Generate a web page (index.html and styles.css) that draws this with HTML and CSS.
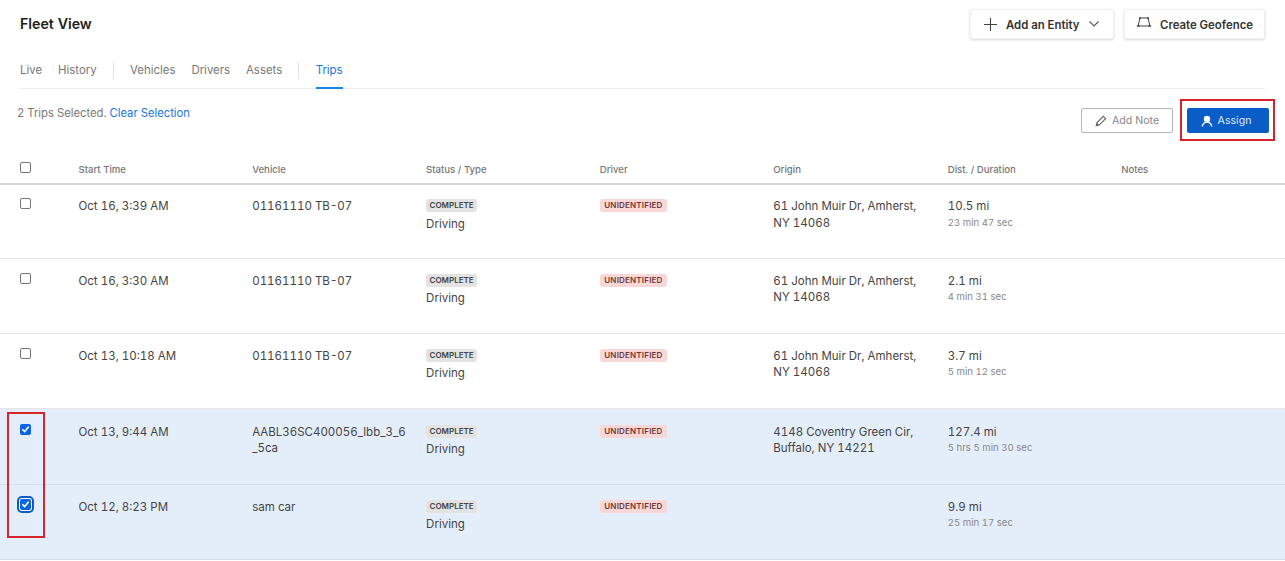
FILE: index.html
```html
<!DOCTYPE html>
<html lang="en">
<head>
<meta charset="utf-8">
<title>Fleet View</title>
<link rel="stylesheet" href="styles.css">
</head>
<body>
<header class="top">
  <h1 class="title">Fleet View</h1>
  <div class="top-actions">
    <button class="btn-card entity">
      <svg width="13" height="13" viewBox="0 0 13 13" class="ic"><path d="M6.500 0v13M0 6.500h13" stroke="#444" stroke-width="1.100" fill="none"/></svg>
      <span>Add an Entity</span>
      <svg width="10" height="6" viewBox="0 0 10 6" class="chev"><path d="M.5.500 5 5 9.500.5" stroke="#555" stroke-width="1.100" fill="none"/></svg>
    </button>
    <button class="btn-card geofence">
      <svg width="14" height="10" viewBox="0 0 14 10" class="ic"><path d="M3 1h8l2 8H1z" stroke="#444" stroke-width="1" fill="none"/><path d="M0 9h2.500M11.500 9H14M2 1h2M10 1h2" stroke="#444" stroke-width="1.500" fill="none"/></svg>
      <span>Create Geofence</span>
    </button>
  </div>
</header>
<nav class="tabs">
  <a class="tab">Live</a>
  <a class="tab">History</a>
  <i class="sep"></i>
  <a class="tab">Vehicles</a>
  <a class="tab">Drivers</a>
  <a class="tab">Assets</a>
  <i class="sep"></i>
  <a class="tab active">Trips</a>
</nav>
<section class="bar">
  <p class="selected">2 Trips Selected. <a class="link">Clear Selection</a></p>
  <div class="bar-actions">
    <button class="btn-note">
      <svg width="12" height="12" viewBox="0 0 12 12"><path d="M1.200 10.800l.7-3L8.300 1.400l2.300 2.300-6.400 6.400z" fill="none" stroke="#666" stroke-width="1.100"/><path d="M1.200 10.800l.7-3 2.300 2.300z" fill="#666"/></svg>
      Add Note
    </button>
    <div class="frame">
      <button class="btn-assign">
        <svg width="12" height="12" viewBox="0 0 12 12"><circle cx="6" cy="4" r="3.200" fill="#fff"/><path d="M1.200 11.500C1.800 8.600 3.600 7.200 6 7.200s4.200 1.400 4.800 4.300" fill="none" stroke="#fff" stroke-width="1.300"/></svg>
        Assign
      </button>
    </div>
  </div>
</section>
<main class="table">
  <div class="row head">
    <div class="cb-cell"><input type="checkbox" class="cb"></div>
    <div>Start Time</div><div>Vehicle</div><div>Status / Type</div><div>Driver</div><div>Origin</div><div>Dist. / Duration</div><div>Notes</div>
  </div>
  <div class="row first">
    <div class="cb-cell"><input type="checkbox" class="cb"></div>
    <div>Oct 16, 3:39 AM</div><div>01161110 TB-07</div>
    <div><span class="tag grey">COMPLETE</span><div class="type">Driving</div></div>
    <div><span class="tag red">UNIDENTIFIED</span></div>
    <div>61 John Muir Dr, Amherst,<br>NY 14068</div>
    <div>10.5 mi<div class="sub">23 min 47 sec</div></div><div></div>
  </div>
  <div class="row">
    <div class="cb-cell"><input type="checkbox" class="cb"></div>
    <div>Oct 16, 3:30 AM</div><div>01161110 TB-07</div>
    <div><span class="tag grey">COMPLETE</span><div class="type">Driving</div></div>
    <div><span class="tag red">UNIDENTIFIED</span></div>
    <div>61 John Muir Dr, Amherst,<br>NY 14068</div>
    <div>2.1 mi<div class="sub">4 min 31 sec</div></div><div></div>
  </div>
  <div class="row">
    <div class="cb-cell"><input type="checkbox" class="cb"></div>
    <div>Oct 13, 10:18 AM</div><div>01161110 TB-07</div>
    <div><span class="tag grey">COMPLETE</span><div class="type">Driving</div></div>
    <div><span class="tag red">UNIDENTIFIED</span></div>
    <div>61 John Muir Dr, Amherst,<br>NY 14068</div>
    <div>3.7 mi<div class="sub">5 min 12 sec</div></div><div></div>
  </div>
  <div class="row picked">
    <div class="cb-cell"><span class="check"><svg width="12" height="12" viewBox="0 0 12 12"><path d="M2.500 6.300 5 8.700 9.500 3.500" fill="none" stroke="#fff" stroke-width="1.800"/></svg></span></div>
    <div>Oct 13, 9:44 AM</div><div class="wrap">AABL36SC400056_lbb_3_6<br>_5ca</div>
    <div><span class="tag grey">COMPLETE</span><div class="type">Driving</div></div>
    <div><span class="tag red">UNIDENTIFIED</span></div>
    <div>4148 Coventry Green Cir,<br>Buffalo, NY 14221</div>
    <div>127.4 mi<div class="sub">5 hrs 5 min 30 sec</div></div><div></div>
  </div>
  <div class="row picked">
    <div class="cb-cell"><span class="check focus"><svg width="12" height="12" viewBox="0 0 12 12"><path d="M2.500 6.300 5 8.700 9.500 3.500" fill="none" stroke="#fff" stroke-width="1.800"/></svg></span></div>
    <div>Oct 12, 8:23 PM</div><div>sam car</div>
    <div><span class="tag grey">COMPLETE</span><div class="type">Driving</div></div>
    <div><span class="tag red">UNIDENTIFIED</span></div>
    <div></div>
    <div>9.9 mi<div class="sub">25 min 17 sec</div></div><div></div>
  </div>
  <div class="cb-frame"></div>
</main>
</body>
</html>
```
FILE: styles.css
```css
* { box-sizing: border-box; }
html, body { margin: 0; padding: 0; }
body {
  width: 1285px;
  height: 561px;
  overflow: hidden;
  background: #fff;
  font-family: Inter, "Liberation Sans", sans-serif;
  font-size: 11.5px;
  font-variant-numeric: tabular-nums;
  color: #444;
}
button { font-family: inherit; cursor: pointer; }

.top {
  display: flex;
  justify-content: space-between;
  align-items: flex-start;
  height: 56px;
  padding: 9px 20px 0 20px;
}
.title {
  margin: 6px 0 0;
  font-size: 14.2px;
  line-height: 18px;
  font-weight: 600;
  color: #222;
}
.top-actions { display: flex; gap: 10px; }
.btn-card {
  display: flex;
  align-items: center;
  height: 30px;
  background: #fff;
  border: 1px solid #f0f0f0;
  border-radius: 3px;
  box-shadow: 0 1px 3px rgba(0,0,0,.16);
  font-size: 11.4px;
  font-weight: 600;
  color: #333;
  padding: 0;
}
.btn-card span { padding-top: 1px; }
.entity { width: 144px; padding-left: 13px; }
.entity span { margin-left: 9px; }
.chev { margin-left: 10px; }
.geofence { width: 141px; padding-left: 12px; }
.geofence span { margin-left: 9px; }
.geofence .ic { margin-top: -4px; }

.tabs {
  display: flex;
  align-items: stretch;
  height: 33px;
  margin: 0 20px;
  border-bottom: 1px solid #ececec;
  font-size: 11.4px;
  color: #777;
}
.tab { display: block; line-height: 29px; margin-right: 16px; }
.tab.active { color: #1a73e8; border-bottom: 2px solid #1a84f0; height: 33px; margin-right: 0; }
.sep { width: 1px; height: 17px; margin: 6px 16.5px 0 0; background: #e2e2e2; }

.bar {
  display: flex;
  justify-content: space-between;
  height: 64px;
  padding-left: 17px;
}
.selected { margin: 16px 0 0; line-height: 16px; font-size: 11.25px; color: #777; }
.link { color: #1a73e8; }
.bar-actions { display: flex; align-items: flex-start; margin-top: 10px; margin-right: 10px; }
.btn-note {
  display: flex;
  align-items: center;
  justify-content: center;
  gap: 5px;
  width: 92px;
  height: 25px;
  margin-top: 9px;
  margin-right: 7px;
  background: #fff;
  border: 1px solid #b5b5b5;
  border-radius: 2px;
  font-size: 10.6px;
  color: #888;
}
.frame {
  width: 95px;
  height: 42px;
  border: 2px solid #d8232a;
  padding: 7px 5px;
}
.btn-assign {
  display: flex;
  align-items: center;
  justify-content: center;
  gap: 5px;
  width: 82px;
  height: 25px;
  padding: 0 4px 0 0;
  background: #0a5cc7;
  border: 0;
  border-radius: 2px;
  font-size: 10.6px;
  color: #dfeaf8;
}

.table { position: relative; }
.row {
  display: grid;
  grid-template-columns: 78.5px 173.7px 173.9px 173.7px 173.5px 174.5px 173.5px 1fr;
  height: 75.2px;
  padding-top: 13.6px;
  line-height: 16.5px;
  border-bottom: 1px solid #e6e6e6;
  color: #444;
}
.row.first { height: 74.4px; }
.row > div { padding-right: 14px; }
.row.head {
  height: 31.6px;
  padding-top: 8.5px;
  font-size: 9.6px;
  font-weight: 500;
  line-height: 16px;
  color: #777;
  border-bottom: 2px solid #d4d4d4;
}
.row.picked { padding-top: 14.4px; background: #e4eefa; border-bottom-color: #d5dfea; }
.row .wrap { padding-right: 0; white-space: nowrap; }
.row > .cb-cell { display: flex; justify-content: flex-start; padding-left: 20px; padding-right: 0; }
.cb {
  width: 11px;
  height: 11px;
  margin: 0;
  appearance: none;
  background: #fff;
  border: 1px solid #767676;
  border-radius: 2px;
}
.check {
  display: flex;
  align-items: center;
  justify-content: center;
  width: 11px;
  height: 11px;
  border-radius: 2px;
  background: #0b63e5;
}
.check.focus { box-shadow: 0 0 0 1px #fff, 0 0 0 3px #0b5cc4; }
.tag {
  display: inline-block;
  height: 13px;
  margin-top: 1px;
  padding: 0 3.5px;
  border-radius: 3px;
  font-size: 8px;
  line-height: 13px;
  font-weight: 600;
  vertical-align: top;
  color: #444;
}
.tag.grey { background: #e3e3e3; }
.tag.red { padding: 0 4.5px; letter-spacing: .2px; background: #fad7d7; color: #6c3a3a; }
.type { margin-top: 1px; }
.sub { font-size: 9.6px; color: #888; line-height: 15px; }
.cb-frame {
  position: absolute;
  left: 7px;
  top: 259px;
  width: 38px;
  height: 126px;
  border: 2px solid #d8232a;
}
```
